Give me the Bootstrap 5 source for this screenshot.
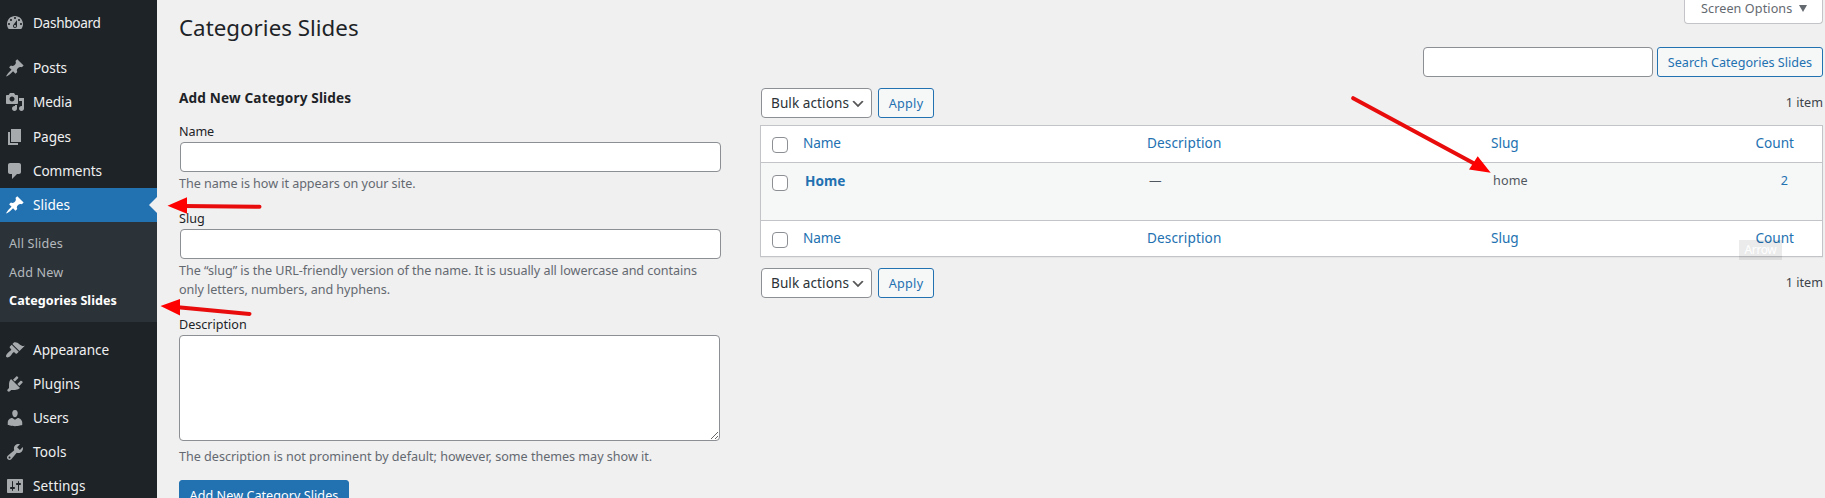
<!DOCTYPE html>
<html lang="en">
<head>
<meta charset="utf-8">
<title>Categories Slides</title>
<link href="https://cdn.jsdelivr.net/npm/bootstrap@5.3.0/dist/css/bootstrap.min.css" rel="stylesheet">
<script src="https://cdn.jsdelivr.net/npm/bootstrap@5.3.0/dist/js/bootstrap.bundle.min.js"></script>
<style>
body{font-family:"Noto Sans",sans-serif;font-size:12.6px;line-height:18px;color:#3c434a;background:#f0f0f0;height:498px;overflow:hidden}
a{text-decoration:none;color:#2271b1}
.side{width:157px;background:#1d2327;padding-top:6px;flex:none}
.side .nav-link{height:34px;padding:0 0 0 5px;color:#f0f0f1;font-size:13.6px;gap:8px;flex:none}
.side svg{width:20px;height:20px;fill:#a7aaad;flex:none}
.side .current{background:#2271b1;color:#fff;position:relative}
.side .current svg{fill:#fff}
.side .current::after{content:"";position:absolute;right:0;top:9px;border:8px solid transparent;border-left:0;border-right-color:#f0f0f0}
.gap-after{margin-bottom:11px}
.submenu{background:#2c3338;height:100px;padding:8px 0 0 9px;margin-bottom:11px}
.submenu a{display:block;color:#b4b9be;line-height:28.5px;letter-spacing:.18px}
.submenu a.on{color:#fff;font-weight:700;letter-spacing:.04px}
.tight{letter-spacing:-.3px}
.snug{letter-spacing:-.1px}
.loose{letter-spacing:.12px}
.page{padding:0 2px 0 22px}
.head{height:47px}
h1{font-size:22.3px;font-weight:400;color:#1d2327;line-height:30px;margin:13px 0 0;letter-spacing:.03px}
.screen-opt{width:139px;height:24px;border:1px solid #c3c4c7;border-top:0;border-radius:0 0 4px 4px;background:#fff;color:#646970;padding:0 0 6px 16px;gap:7px;letter-spacing:.1px}
.tri{border:4px solid transparent;border-top:7px solid #646970;border-bottom:0}
.form-control,.form-select{border:1px solid #8c8f94;border-radius:4px;height:30px;padding:0 8px}
.search{width:230px}
.btn{font-size:12.6px;border-radius:3px;padding:0;height:30px;line-height:29px}
.btn-wp{border:1px solid #2271b1;color:#2271b1;background:#f6f7f7}
.btn-search{width:166px}
.btn-apply{width:56px;letter-spacing:.3px;line-height:30px}
.btn-add{background:#2271b1;border:1px solid #2271b1;color:#fff;width:170px;letter-spacing:.05px}
.left{width:542px;flex:none}
h2{font-size:13.6px;font-weight:700;color:#1d2327;line-height:20px;margin:0 0 14px;letter-spacing:.16px}
.field{margin-bottom:16px}
.field label{display:block;color:#1d2327;line-height:20px}
.field input{margin-left:1px;width:541px}
.field textarea{width:541px;height:106px}
.field p{color:#646970;line-height:19px;margin:2px 0 0;letter-spacing:-.05px;white-space:nowrap}
.field-last{margin-bottom:14px}
.field-last p{margin-top:6px;letter-spacing:-.02px}
.form-select{width:111px;color:#2c3338;font-size:13.6px;line-height:28px;letter-spacing:.06px;margin:0 6px 0 1px;padding:0 0 0 9px;background-size:16px;background-position:right 5px top 55%;background-image:url("data:image/svg+xml,%3Csvg xmlns='http://www.w3.org/2000/svg' viewBox='0 0 20 20'%3E%3Cpath d='M5 6l5 5 5-5 2 1-7 7-7-7 2-1z' fill='%23555'/%3E%3C/svg%3E")}
.cats{width:1063px;border:1px solid #c3c4c7;background:#fff;margin:7px 0 11px;font-size:13.6px;box-shadow:0 1px 1px rgba(0,0,0,.04);table-layout:fixed;border-collapse:separate;border-spacing:0}
.cats>:not(caption)>*>*{font-weight:400;padding:7px 0 0 9px;border:0;background:none;box-shadow:none;vertical-align:top;line-height:20px}
.cats th:first-child,.cats td:first-child{width:33px;padding-left:11px!important}
.cats thead tr{height:36px}
.cats tfoot tr{height:35px}
.cats>tbody>tr>td{background:#f6f7f7!important;border-top:1px solid #c3c4c7;border-bottom:1px solid #c3c4c7;height:59px;padding:8px 0 0 11px;font-size:12.6px;color:#50575e}
.cats tbody b{font-size:13.6px;letter-spacing:.05px}
.cats th:last-child{width:78px;text-align:right;padding-right:28px!important}
.cats td:last-child{text-align:right;padding-right:34px!important}
.cats .w-main{width:344px}
.cats .form-check-input{border:1px solid #8c8f94;border-radius:4px;width:16px;height:16px;margin:4px 0 0;display:block}
.marks{position:absolute;left:0;top:0;pointer-events:none}
.tip{position:absolute;left:1739px;top:240px;width:43px;height:20px;background:rgba(0,0,0,.08);color:#fff;text-align:center;line-height:19px;font-size:12px;letter-spacing:-.4px}
</style>
</head>
<body>
<div class="d-flex h-100">
<aside class="side">
<nav class="nav flex-column flex-nowrap">
<a class="nav-link d-flex align-items-center gap-after" href="#"><svg viewBox="0 0 20 20"><path d="M3.76 16h12.48c1.1-1.37 1.76-3.11 1.76-5 0-4.42-3.58-8-8-8s-8 3.58-8 8c0 1.89.66 3.63 1.76 5zM10 4c.55 0 1 .45 1 1s-.45 1-1 1-1-.45-1-1 .45-1 1-1zM6 6c.55 0 1 .45 1 1s-.45 1-1 1-1-.45-1-1 .45-1 1-1zm8 0c.55 0 1 .45 1 1s-.45 1-1 1-1-.45-1-1 .45-1 1-1zm-5.37 5.55L12 7v6c0 1.1-.9 2-2 2s-2-.9-2-2c0-.57.24-1.08.63-1.45zM4 10c.55 0 1 .45 1 1s-.45 1-1 1-1-.45-1-1 .45-1 1-1zm12 0c.55 0 1 .45 1 1s-.45 1-1 1-1-.45-1-1 .45-1 1-1zm-5 3c0-.55-.45-1-1-1s-1 .45-1 1 .45 1 1 1 1-.45 1-1z"/></svg><span class="tight">Dashboard</span></a>
<a class="nav-link d-flex align-items-center" href="#"><svg viewBox="0 0 20 20"><path id="pin" d="M10.44 3.02l1.82-1.82 6.36 6.35-1.83 1.82c-1.05-.68-2.48-.57-3.41.36l-.75.75c-.92.93-1.04 2.35-.35 3.41l-1.83 1.82-2.41-2.41-2.8 2.79c-.42.42-3.38 2.71-3.8 2.29s1.86-3.39 2.28-3.81l2.79-2.79L4.1 9.36l1.83-1.82c1.05.69 2.48.57 3.4-.36l.75-.75c.93-.92 1.05-2.35.36-3.41z"/></svg><span class="snug">Posts</span></a>
<a class="nav-link d-flex align-items-center mb-px" style="margin-bottom:1px" href="#"><svg viewBox="0 0 20 20"><path d="M13 11V4c0-.55-.45-1-1-1h-1.67L9 1H5L3.67 3H2c-.55 0-1 .45-1 1v7c0 .55.45 1 1 1h10c.55 0 1-.45 1-1zM7 4.5c1.38 0 2.5 1.12 2.5 2.5S8.38 9.5 7 9.5 4.5 8.38 4.5 7 5.62 4.5 7 4.5zM14 6h5v10.5c0 1.38-1.12 2.5-2.5 2.5S14 17.88 14 16.5s1.12-2.5 2.5-2.5c.17 0 .34.02.5.05V9h-3V6zm-4 8.05V13h2v3.5c0 1.38-1.12 2.5-2.5 2.5S7 17.88 7 16.5 8.12 14 9.5 14c.17 0 .34.02.5.05z"/></svg><span class="snug">Media</span></a>
<a class="nav-link d-flex align-items-center" href="#"><svg viewBox="0 0 20 20"><path d="M6 15V2h10v13H6zm-1 1h8v2H3V5h2v11z"/></svg><span class="snug">Pages</span></a>
<a class="nav-link d-flex align-items-center" href="#"><svg viewBox="0 0 20 20"><path d="M5 2h9c1.1 0 2 .9 2 2v7c0 1.1-.9 2-2 2h-2l-5 5v-5H5c-1.1 0-2-.9-2-2V4c0-1.1.9-2 2-2z"/></svg><span class="snug">Comments</span></a>
<a class="nav-link d-flex align-items-center current" href="#"><svg viewBox="0 0 20 20"><use href="#pin"/></svg><span>Slides</span></a>
<div class="submenu"><a href="#">All Slides</a><a href="#">Add New</a><a class="on" href="#">Categories Slides</a></div>
<a class="nav-link d-flex align-items-center" href="#"><svg viewBox="0 0 20 20"><path d="M14.48 11.06L7.41 3.99l1.5-1.5c.5-.56 2.3-.47 3.51.32 1.21.8 1.43 1.28 2.91 2.1 1.18.64 2.45 1.26 4.45.85zm-.71.71L6.7 4.7 4.93 6.47c-.39.39-.39 1.02 0 1.41l1.06 1.06c.39.39.39 1.03 0 1.42-.6.6-1.43 1.11-2.21 1.69-.35.26-.7.53-1.01.84C1.43 14.23.4 16.08 1.4 17.07c.99 1 2.84-.03 4.18-1.36.31-.31.58-.66.85-1.02.57-.78 1.08-1.61 1.69-2.21.39-.39 1.02-.39 1.41 0l1.06 1.06c.39.39 1.02.39 1.41 0z"/></svg><span>Appearance</span></a>
<a class="nav-link d-flex align-items-center" href="#"><svg viewBox="0 0 20 20"><path d="M13.11 4.36L9.87 7.6 8 5.73l3.24-3.24c.35-.34 1.05-.2 1.56.32.52.51.66 1.21.31 1.55zm-8 1.77l.91-1.12 9.01 9.01-1.19.84c-.71.71-2.63 1.16-3.82 1.16H6.14L4.9 17.26c-.59.59-1.54.59-2.12 0-.59-.58-.59-1.53 0-2.12l1.24-1.24v-3.88c0-1.13.4-3.19 1.09-3.89zm7.26 3.97l3.24-3.24c.34-.35 1.04-.21 1.55.31.52.51.66 1.21.31 1.55l-3.24 3.25z"/></svg><span>Plugins</span></a>
<a class="nav-link d-flex align-items-center" href="#"><svg viewBox="0 0 20 20"><path d="M10 9.25c-2.27 0-2.73-3.44-2.73-3.44C7 4.02 7.82 2 9.97 2c2.16 0 2.98 2.02 2.71 3.81 0 0-.41 3.44-2.68 3.44zm0 2.57L12.72 10c2.39 0 4.52 2.33 4.52 4.53v2.49s-3.65 1.13-7.24 1.13c-3.65 0-7.24-1.13-7.24-1.13v-2.49c0-2.25 1.94-4.48 4.47-4.48z"/></svg><span class="snug">Users</span></a>
<a class="nav-link d-flex align-items-center" href="#"><svg viewBox="0 0 20 20"><path d="M16.68 9.77c-1.34 1.34-3.3 1.67-4.95.99l-5.41 6.52c-.99.99-2.59.99-3.58 0s-.99-2.59 0-3.57l6.52-5.42c-.68-1.65-.35-3.61.99-4.95 1.28-1.28 3.12-1.62 4.72-1.06l-2.89 2.89 2.82 2.82 2.86-2.87c.53 1.58.18 3.39-1.08 4.65zM3.81 16.21c.4.39 1.04.39 1.43 0 .4-.4.4-1.04 0-1.43-.39-.4-1.03-.4-1.43 0-.39.39-.39 1.03 0 1.43z"/></svg><span class="loose">Tools</span></a>
<a class="nav-link d-flex align-items-center" href="#"><svg viewBox="0 0 20 20"><path d="M18 16V4c0-.55-.45-1-1-1H3c-.55 0-1 .45-1 1v12c0 .55.45 1 1 1h14c.55 0 1-.45 1-1zM8 11h1c.55 0 1 .45 1 1s-.45 1-1 1H8v1.5c0 .28-.22.5-.5.5s-.5-.22-.5-.5V13H6c-.55 0-1-.45-1-1s.45-1 1-1h1V5.5c0-.28.22-.5.5-.5s.5.22.5.5V11zm5-2h-1c-.55 0-1-.45-1-1s.45-1 1-1h1V5.5c0-.28.22-.5.5-.5s.5.22.5.5V7h1c.55 0 1 .45 1 1s-.45 1-1 1h-1v5.5c0 .28-.22.5-.5.5s-.5-.22-.5-.5V9z"/></svg><span class="loose">Settings</span></a>
</nav>
</aside>
<main class="page flex-fill">
<div class="head d-flex justify-content-between"><h1>Categories Slides</h1><div class="screen-opt d-flex align-items-center">Screen Options<i class="tri"></i></div></div>
<form class="d-flex justify-content-end gap-1 mb-0"><input class="form-control search" type="search"><button type="button" class="btn btn-wp btn-search">Search Categories Slides</button></form>
<div class="d-flex" style="gap:39px;margin-top:11px">
<form class="left">
<h2>Add New Category Slides</h2>
<div class="field"><label class="snug">Name</label><input class="form-control" type="text"><p>The name is how it appears on your site.</p></div>
<div class="field"><label>Slug</label><input class="form-control" type="text"><p>The “slug” is the URL-friendly version of the name. It is usually all lowercase and contains<br>only letters, numbers, and hyphens.</p></div>
<div class="field field-last"><label>Description</label><textarea class="form-control"></textarea><p>The description is not prominent by default; however, some themes may show it.</p></div>
<button type="button" class="btn btn-add">Add New Category Slides</button>
</form>
<section class="flex-fill">
<div class="d-flex align-items-center"><select class="form-select"><option>Bulk actions</option></select><button type="button" class="btn btn-wp btn-apply">Apply</button><span class="ms-auto">1 item</span></div>
<table class="table cats">
<thead><tr><th><input class="form-check-input" type="checkbox"></th><th class="w-main"><a class="snug" href="#">Name</a></th><th class="w-main"><a class="loose" href="#">Description</a></th><th><a href="#">Slug</a></th><th><a href="#">Count</a></th></tr></thead>
<tbody><tr><td><input class="form-check-input" type="checkbox"></td><td><a href="#"><b>Home</b></a></td><td>—</td><td><span class="loose">home</span></td><td><a href="#">2</a></td></tr></tbody>
<tfoot><tr><th><input class="form-check-input" type="checkbox"></th><th><a class="snug" href="#">Name</a></th><th><a class="loose" href="#">Description</a></th><th><a href="#">Slug</a></th><th><a href="#">Count</a></th></tr></tfoot>
</table>
<div class="d-flex align-items-center"><select class="form-select"><option>Bulk actions</option></select><button type="button" class="btn btn-wp btn-apply">Apply</button><span class="ms-auto">1 item</span></div>
</section>
</div>
</main>
</div>
<svg class="marks" width="1825" height="498" stroke-linecap="round" stroke-width="4">
<path d="M183 206l76.500.8M178 307.300l71.500 6.600M1353.200 98.200l122.800 66.300" stroke="#e90c0c"/>
<path d="M167.500 205.700l19.500-8.500v16.500zM160.500 306l19.500-7v16.500zM1490.700 172.700l-13-16.400-8.700 13.200z" fill="#f00"/>
</svg>
<div class="tip">Arrow</div>
</body>
</html>
